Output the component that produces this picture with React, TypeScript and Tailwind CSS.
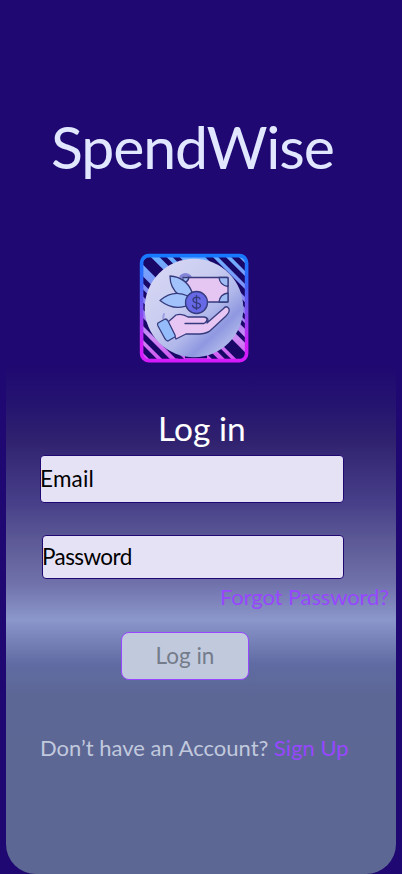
function Logo() {
  return (
    <svg className="block h-[110px] w-[110px]" viewBox="0 0 110 110" role="img" aria-label="SpendWise logo">
      <defs>
        <linearGradient id="frame" x1="0" y1="0" x2="0" y2="1">
          <stop offset="0" stopColor="#1679ff" />
          <stop offset=".2" stopColor="#2f69fb" />
          <stop offset=".5" stopColor="#7552ee" />
          <stop offset=".85" stopColor="#d21cfa" />
          <stop offset="1" stopColor="#d41cfa" />
        </linearGradient>
        <linearGradient id="stripe" x1="0" y1="0" x2="0" y2="1">
          <stop offset="0" stopColor="#6db2ff" />
          <stop offset=".5" stopColor="#8d7cf2" />
          <stop offset=".78" stopColor="#cf8cf4" />
          <stop offset="1" stopColor="#d050f2" />
        </linearGradient>
        <linearGradient id="disc" x1=".1" y1=".1" x2=".85" y2=".9">
          <stop offset="0" stopColor="#d6d6f4" />
          <stop offset=".4" stopColor="#c9ccf0" />
          <stop offset=".65" stopColor="#b0b7ea" />
          <stop offset=".82" stopColor="#8f98e0" />
          <stop offset="1" stopColor="#b4bdec" />
        </linearGradient>
        <clipPath id="inner">
          <rect x="3" y="3" width="104" height="104" rx="5" />
        </clipPath>
      </defs>
      <rect x="1.500" y="1.500" width="107" height="107" rx="8" fill="url(#stripe)" />
      <g clipPath="url(#inner)" stroke="#190767" fill="none">
        <path d="M1 24 16 39M1 37 12 48M1 50 9 58" strokeWidth="5" />
        <path d="M6 6 26 26" strokeWidth="11" />
        <path d="M20 0 36 16M33 0 45 12" strokeWidth="5" />
        <path d="M66 0 110 44M79 0 110 31M92 0 110 18" strokeWidth="5.500" />
        <path d="M98 44 110 56M100 58 110 68" strokeWidth="4" />
        <path d="M1 66 39 104M1 80 33 112M1 93 21 113" strokeWidth="5.500" />
        <path d="M37 101 50 114M46 103h22M70 100 80 110M79 96 93 110" strokeWidth="4.500" />
        <path d="M86 87 106 107" strokeWidth="11" />
        <path d="M96 77 110 91M101 68 110 77" strokeWidth="4" />
      </g>
      <circle cx="55" cy="55" r="49.300" fill="url(#disc)" />
      <rect x="2.600" y="2.600" width="105" height="105" rx="7" fill="none" stroke="url(#frame)" strokeWidth="3.600" />
      <g stroke="#353b7d" strokeWidth="1.300" strokeLinejoin="round" strokeLinecap="round">
        <path d="M42 23.500q5-4 9 0" stroke="#8383da" strokeWidth="3" fill="none" />
        <path d="M25 61l-1 4" stroke="#9c9fe4" strokeWidth="2" fill="none" />
        <rect x="44" y="24.500" width="45" height="24.500" rx="1" fill="#e5c5f2" />
        <path d="M80 24.500h9v9q-8-1-9-9M89 40v9h-9q1-8 9-9M44 24.500h6q-1 4-4 5" fill="#9fbcf4" />
        <path d="M31 23Q47 24 53 39L49 47 40 42Q31 35 31 23Z" fill="#a2c2fb" />
        <path d="M21 47.500Q34 36 49 43L53 50Q37 60 21 47.500Z" fill="#a2c2fb" />
        <circle cx="57.500" cy="49.500" r="11" fill="#6668e5" />
        <path d="M61 46c-1-3-7-2-7 1 0 4 7.500 2 7.500 5.500 0 3-7 4-8 0M57.500 42.500v14" fill="none" />
        <path d="M29 69 37 62Q43 60 49 64H65Q71 65 68 70L84 56Q88 51.500 90 56 91 59 87 63L73 76Q69 80.500 61 81H47L37 86Z" fill="#e8c6f3" />
        <path d="M46 70.500H65Q68 69.500 68 66" fill="none" />
        <path d="M19 70 26 66Q28 66 29 68L36 82Q37 84 34 85L29 88Q27 88 25 84L19 73Q18 71 19 70Z" fill="#94bcfb" />
      </g>
    </svg>
  );
}

export default function App() {
  return (
    <main className="flex h-[874px] w-[402px] flex-col overflow-hidden bg-[#1f0871] font-['Lato',sans-serif]">
      <header className="flex h-[364px] shrink-0 flex-col">
        <h1 className="ml-[51px] mt-[111px] h-[72px] whitespace-nowrap text-[59px] leading-[72px] tracking-[-1.15px] text-[#e1e7ff]">SpendWise</h1>
        <div className="ml-[139px] mt-[70px]"><Logo /></div>
      </header>
      <section className="mx-[6px] flex h-[510px] shrink-0 flex-col rounded-b-[30px] bg-[linear-gradient(to_bottom,#1f0871_0px,#241270_36px,#30216f_76px,#48418a_141px,#5c5996_176px,#7071aa_219px,#8b97cb_256px,#5f6ba2_300px,#5d6795_336px,#5d6793_510px)]">
        <h2 className="ml-[152px] mt-[44px] h-[40px] whitespace-nowrap text-[33.5px] leading-[40px] text-white">Log in</h2>
        <form className="flex flex-col" onSubmit={(event) => event.preventDefault()}>
          <input aria-label="Email" placeholder="Email" className="ml-[34px] mt-[7px] h-[48px] w-[304px] rounded-[4px] border border-[#1f0871] bg-[#e6e2f6] pb-[1px] text-[22.5px] indent-[-1px] tracking-[0.2px] text-black outline-none placeholder:text-black placeholder:opacity-100" />
          <input aria-label="Password" type="password" placeholder="Password" className="ml-[36px] mt-[32px] h-[44px] w-[302px] rounded-[4px] border border-[#1f0871] bg-[#e6e2f6] pb-[1px] text-[22.5px] indent-[-1px] tracking-[-0.6px] text-black outline-none placeholder:text-black placeholder:opacity-100" />
          <a href="#" className="mr-[7px] mt-[4px] h-[28px] self-end whitespace-nowrap text-[22px] leading-[28px] tracking-[-0.12px] text-[#9747ff]">Forgot Password?</a>
          <button className="ml-[115px] mt-[21px] h-[48px] w-[128px] rounded-[8px] border border-[#9747ff] bg-[#c1c9dd] text-[22.5px] text-[#747c8a]">Log in</button>
        </form>
        <p className="ml-[34px] mt-[54px] h-[28px] whitespace-nowrap text-[22px] leading-[28px] text-[#c1c9dd]">Don’t have an Account? <a href="#" className="text-[#9747ff]">Sign Up</a></p>
      </section>
    </main>
  );
}
